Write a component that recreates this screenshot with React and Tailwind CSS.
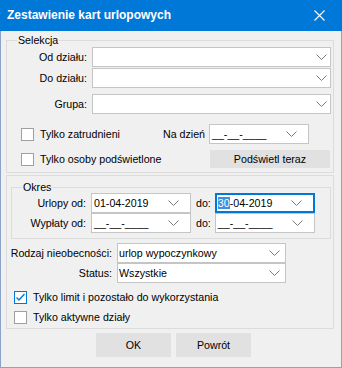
import React from "react";

const Chevron = () => (
  <svg width="11" height="6" viewBox="0 0 11 6" className="shrink-0">
    <polyline points="0.5,0.5 5.5,5.5 10.5,0.5" fill="none" stroke="#7a7a7a" strokeWidth="1" />
  </svg>
);

const Combo = ({ value = "", className = "" }) => (
  <div className={`flex h-[20px] items-center border border-[#c5c5c5] bg-white pl-[1px] ${className}`}>
    <span className="flex-1 truncate">{value}</span>
    <Chevron />
  </div>
);

const DateBox = ({ value, focused }) => (
  <div
    className={`flex h-[20px] w-[100px] items-center bg-white pr-[11px] ${
      focused ? "border-2 border-[#0078d7] pl-[1px]" : "border border-[#c5c5c5] pl-[2px]"
    }`}
  >
    <span className="flex-1 whitespace-pre">
      {value ? (
        focused ? (
          <>
            <span className="bg-[#3d8fe0] text-white">{value.slice(0, 2)}</span>
            {value.slice(2)}
          </>
        ) : (
          value
        )
      ) : (
        "__-__-____"
      )}
    </span>
    <Chevron />
  </div>
);

const Check = ({ checked, label }) => (
  <label className="flex items-center gap-[6px]">
    <span
      className={`flex h-[13px] w-[13px] items-center justify-center bg-white ${
        checked ? "border border-[#0078d7]" : "border border-[#a0a0a0]"
      }`}
    >
      {checked && (
        <svg width="11" height="11" viewBox="0 0 11 11">
          <polyline points="1.5,5.5 4,8 9.5,2" fill="none" stroke="#0078d7" strokeWidth="1.4" />
        </svg>
      )}
    </span>
    <span>{label}</span>
  </label>
);

export default function App() {
  return (
    <div className="flex h-[368px] w-[342px] flex-col bg-[#f0f0f0] font-['Liberation_Sans',Arial,sans-serif] text-[10.67px] leading-[13px] text-black">
      {/* title bar */}
      <div className="flex h-[31px] shrink-0 items-center justify-between bg-[#0078d7] pl-[7px] text-white">
        <span className="text-[12px] font-bold">Zestawienie kart urlopowych</span>
        <div className="flex h-full w-[46px] items-center justify-center">
          <svg width="11" height="11" viewBox="0 0 11 11">
            <path d="M0.5 0.5 L10.5 10.5 M10.5 0.5 L0.5 10.5" stroke="#fff" strokeWidth="1.1" />
          </svg>
        </div>
      </div>

      <div className="flex flex-1 flex-col border-x border-b border-[#8ca3c9] pl-[5px]">
        {/* Selekcja */}
        <fieldset className="mt-[3px] w-[328px] border border-[#dcdcdc] px-0 pb-[4px]">
          <legend className="ml-[10px] px-[1px] leading-[12px]">Selekcja</legend>
          <div className="mt-[1px] flex items-center">
            <span className="w-[80px] text-right">Od działu:</span>
            <Combo className="ml-[5px] w-[239px] pr-[3px]" />
          </div>
          <div className="mt-[1px] flex items-center">
            <span className="w-[80px] text-right">Do działu:</span>
            <Combo className="ml-[5px] w-[239px] pr-[3px]" />
          </div>
          <div className="mt-[6px] flex items-center">
            <span className="w-[80px] text-right">Grupa:</span>
            <Combo className="ml-[5px] w-[239px] pr-[3px]" />
          </div>
          <div className="mt-[10px] flex h-[20px] items-center pl-[14px]">
            <Check label="Tylko zatrudnieni" />
            <span className="ml-auto">Na dzień</span>
            <div className="ml-[4px] mr-[24px]">
              <DateBox />
            </div>
          </div>
          <div className="mt-[6px] flex h-[18px] items-center pl-[14px]">
            <Check label="Tylko osoby podświetlone" />
            <button className="ml-auto mr-[3px] h-[18px] w-[120px] bg-[#e1e1e1]">Podświetl teraz</button>
          </div>
        </fieldset>

        {/* Okres + pozostałe */}
        <div className="mt-[2px] w-[328px] border border-[#dcdcdc] pb-[1px]">
          <fieldset className="ml-[4px] mt-[5px] w-[320px] border border-[#dcdcdc] px-0 pb-[5px]">
            <legend className="ml-[10px] px-[1px] leading-[12px]">Okres</legend>
            <div className="flex items-center">
              <span className="w-[74px] text-right">Urlopy od:</span>
              <div className="ml-[5px]">
                <DateBox value="01-04-2019" />
              </div>
              <span className="ml-[5px]">do:</span>
              <div className="ml-[4px]">
                <DateBox value="30-04-2019" focused />
              </div>
            </div>
            <div className="flex items-center">
              <span className="w-[74px] text-right">Wypłaty od:</span>
              <div className="ml-[5px]">
                <DateBox />
              </div>
              <span className="ml-[5px]">do:</span>
              <div className="ml-[4px]">
                <DateBox />
              </div>
            </div>
          </fieldset>

          <div className="mt-[4px] flex items-center">
            <span className="w-[105px] text-right">Rodzaj nieobecności:</span>
            <Combo value="urlop wypoczynkowy" className="ml-[5px] w-[169px] pr-[5px]" />
          </div>
          <div className="flex items-center">
            <span className="w-[105px] text-right">Status:</span>
            <Combo value="Wszystkie" className="ml-[5px] w-[169px] pr-[5px]" />
          </div>
          <div className="mt-[4px] flex h-[20px] items-center pl-[7px]">
            <Check checked label="Tylko limit i pozostało do wykorzystania" />
          </div>
          <div className="flex h-[20px] items-center pl-[7px]">
            <Check label="Tylko aktywne działy" />
          </div>
        </div>

        {/* przyciski */}
        <div className="mt-[4px] flex gap-[5px] pl-[90px]">
          <button className="h-[24px] w-[75px] bg-[#e1e1e1]">OK</button>
          <button className="h-[24px] w-[75px] bg-[#e1e1e1]">Powrót</button>
        </div>
      </div>
    </div>
  );
}
